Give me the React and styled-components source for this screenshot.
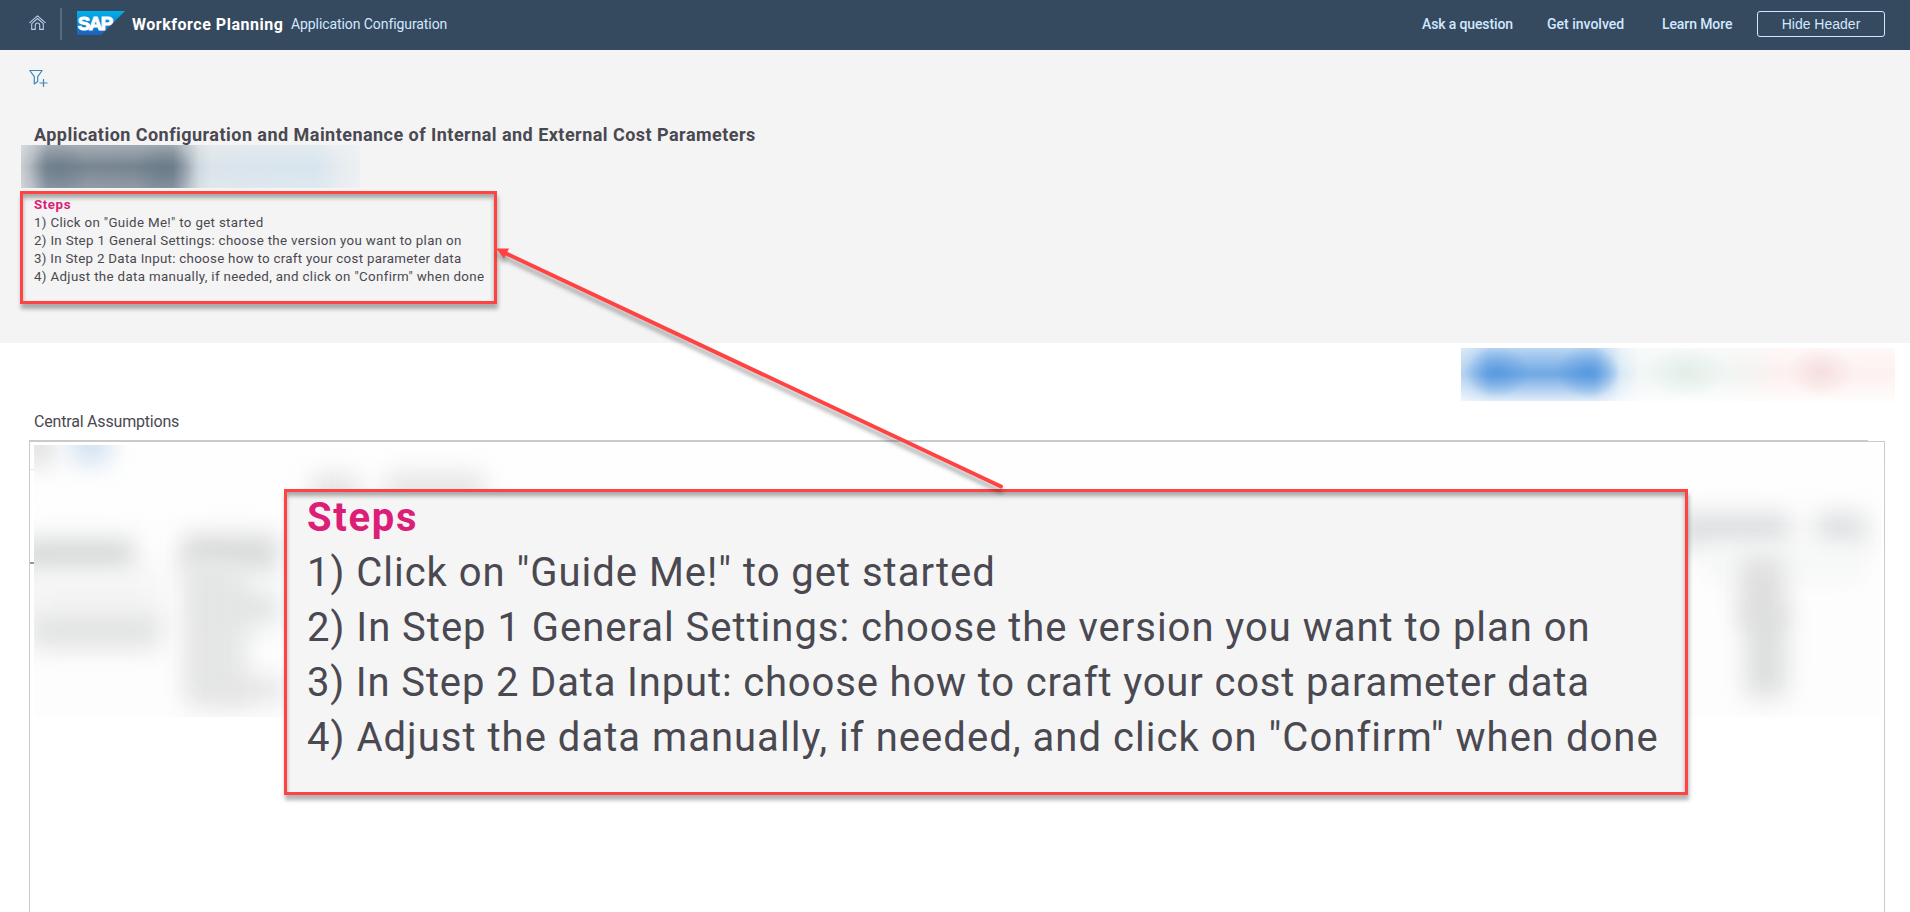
import React from "react";
import styled, { createGlobalStyle } from "styled-components";

const Global = createGlobalStyle`
  *{box-sizing:border-box}
  html,body{margin:0;padding:0;overflow:hidden;background:#fff}
  body{font-family:Roboto,"Liberation Sans",sans-serif;color:#4a4850}
`;
const Page = styled.div`width:1910px;height:912px;position:relative;display:flex;flex-direction:column;overflow:hidden;`;
const Header = styled.header`height:50px;flex:none;background:#354a5f;display:flex;align-items:center;padding:0 25px 2px 29px;color:#d1e8ff;`;
const Divider = styled.i`width:2px;height:32px;background:#576a7e;margin:0 15px 0 14px;`;
const Brand = styled.strong`font-size:16px;color:#fff;font-weight:700;margin-left:7px;width:159px;letter-spacing:.52px;white-space:nowrap;`;
const Subtitle = styled.span`font-size:14px;letter-spacing:-.08px;white-space:nowrap;`;
const Links = styled.nav`margin-left:auto;display:flex;align-items:center;`;
const Link = styled.a`font-size:14px;font-weight:500;width:${p => p.$width}px;white-space:nowrap;letter-spacing:${p => p.$ls || 0}px;`;
const HideButton = styled.button`width:128px;height:26px;border:1px solid #d1e8ff;border-radius:3px;background:none;color:#d1e8ff;font:14px "Liberation Sans",sans-serif;padding:0;`;
const Intro = styled.section`height:293px;flex:none;background:#f4f4f4;padding:19px 20px 0;display:flex;flex-direction:column;align-items:flex-start;`;
const FilterRow = styled.div`height:56px;padding-left:9px;`;
const Title = styled.h1`margin:0;padding-left:14px;font-size:18px;line-height:20px;font-weight:700;white-space:nowrap;letter-spacing:.465px;`;
const TabsBlur = styled.div`width:339px;height:43px;margin:0 0 3px 1px;
  background:radial-gradient(ellipse 30px 30px at 38px 26px,rgba(98,116,132,.5),transparent),radial-gradient(ellipse 30px 30px at 142px 26px,rgba(98,116,132,.5),transparent),
  linear-gradient(rgba(244,244,244,.36),transparent 50%,rgba(244,244,244,.2)),
  linear-gradient(90deg,#c9ced3 0,#aab2ba 12px,#7b8894 26px,#74828f 152px,#a3aeb8 166px,#cfd8df 178px,#dbe4eb 190px,#d8e5ee 295px,#e6ecf0 320px,#edf0f2);`;
const Frame = styled.div`border:3px solid #ff4343;box-shadow:1px 5px 4px rgba(0,0,0,.3),inset 0 4px 4px rgba(0,0,0,.32);`;
const SmallFrame = styled(Frame)`width:477px;height:113px;padding:2px 11px;display:flex;flex-direction:column;`;
const BigFrame = styled(Frame)`position:absolute;left:284px;top:489px;width:1404px;height:306px;background:#f5f5f5;padding:0 20px;display:flex;flex-direction:column;`;
const Line = styled.div`font-size:${p => p.$big ? 40 : 13.33}px;line-height:${p => p.$big ? 55 : 18}px;white-space:nowrap;letter-spacing:${p => p.$ls}em;
  ${p => p.$big && p.$head ? "margin-top:-2px;" : ""}
  font-weight:${p => p.$head ? 700 : 400};color:${p => p.$head ? "#dc1e78" : "#4a4850"};`;
const Content = styled.main`flex:1;display:flex;flex-direction:column;padding:5px 15px 0 29px;`;
const ActionsBlur = styled.div`align-self:flex-end;width:434px;height:53px;flex:none;
  background:radial-gradient(ellipse 32px 26px at 36px 24px,rgba(74,145,220,.6),transparent),radial-gradient(ellipse 32px 26px at 127px 24px,rgba(74,145,220,.65),transparent),
  radial-gradient(ellipse 40px 26px at 225px 24px,#e3eee8,transparent),radial-gradient(ellipse 34px 26px at 360px 24px,#f5dfdf,transparent),
  linear-gradient(rgba(255,255,255,.5),transparent 45%,transparent 52%,rgba(255,255,255,.78)),
  linear-gradient(90deg,#b9d4f0 0,#a5c9ee 10px,#74abe5 28px,#74abe5 134px,#a4c9ed 147px,#d9e9f5 160px,#f1f6f6 178px,#f0f6f3 260px,#f6f3f1 295px,#fdf1f0 320px,#fdf2f1);`;
const CaptionWrap = styled.div`height:39px;flex:none;`;
const Caption = styled.h2`margin:10px 0 0 5px;line-height:22px;font-size:16px;font-weight:400;letter-spacing:-.19px;`;
const Rule = styled.div`height:1px;width:1839px;background:#cacaca;flex:none;`;
const Grid = styled.div`flex:1;width:1856px;border:1px solid #cacaca;border-bottom:0;padding:3px 2px 0 4px;position:relative;`;
const Tick = styled.i`position:absolute;left:0;top:${p => p.$y}px;width:4px;height:${p => p.$h}px;background:${p => p.$c};`;
const Haze = styled.div`position:relative;height:272px;overflow:hidden;background:linear-gradient(#fefefe,#fdfdfd);`;
const Smudge = styled.i`position:absolute;left:${p => p.$b[0]}px;top:${p => p.$b[1]}px;width:${p => p.$b[2]}px;height:${p => p.$b[3]}px;background:${p => p.$c};filter:blur(12px);`;
const Arrow = styled.svg`position:absolute;left:480px;top:235px;filter:drop-shadow(0 5px 2px rgba(0,0,0,.33));`;

const smudges = [
  [[-10, -20, 28, 40], "#dcdcdc"], [[38, -20, 38, 38], "#cfe0f0"],
  [[278, 30, 46, 34], "#e2e2e2"], [[352, 28, 98, 34], "#e4e4e4"],
  [[-16, 94, 116, 38], "#d6d8d8"], [[-10, 124, 140, 50], "#f5f5f5"], [[-4, 169, 130, 34], "#e0e1e1"],
  [[148, 90, 96, 36], "#d8d9d9"], [[154, 120, 60, 140], "#e8e9e9"], [[156, 120, 34, 134], "#e4e5e5"],
  [[190, 145, 54, 36], "#e2e4e4"], [[190, 234, 60, 22], "#e2e2e2"],
  [[1640, 68, 116, 34], "#dcdee0"], [[1782, 68, 50, 34], "#dddfe1"], [[1670, 100, 160, 36], "#f6f7f7"],
  [[1706, 112, 44, 70], "#dedede"], [[1712, 160, 40, 92], "#dcdddd"],
];
const steps = [
  { text: "Steps", ls: 0.042 },
  { text: '1) Click on "Guide Me!" to get started', ls: 0.0245 },
  { text: "2) In Step 1 General Settings: choose the version you want to plan on", ls: 0.0245 },
  { text: "3) In Step 2 Data Input: choose how to craft your cost parameter data", ls: 0.0212 },
  { text: '4) Adjust the data manually, if needed, and click on "Confirm" when done', ls: 0.0256 },
];
const Steps = ({ big }) => steps.map((s, i) => <Line key={s.text} $big={big} $head={i === 0} $ls={s.ls}>{s.text}</Line>);

const HomeIcon = styled.svg`margin-top:-2px;flex:none;`;
const Home = () => (
  <HomeIcon width="17" height="16" viewBox="0 0 17 16" fill="none" stroke="#b9cfe6" strokeWidth="1.1" strokeLinejoin="round" strokeLinecap="round">
    <path d="M.8 7.6 8.5.8l7.7 6.8M2.7 8.6 8.5 3.5l5.8 5.1M2.7 8.8v5.6h3.6v-4.2a2.2 2.2 0 0 1 4.4 0v4.2h3.6V8.8" />
  </HomeIcon>
);
const LogoMark = styled.svg`flex:none;margin-top:-2px;`;
const Logo = () => (
  <LogoMark width="48" height="24" viewBox="0 0 48 24">
    <defs><linearGradient id="sap" x1="0" y1="0" x2="0" y2="1"><stop stopColor="#00b1eb" /><stop offset="1" stopColor="#1e5fbb" /></linearGradient></defs>
    <path fill="url(#sap)" d="M0 0h48L24 24H0z" />
    <text x=".8" y="18.8" fill="#fff" stroke="#fff" strokeWidth="1" fontFamily="Liberation Sans,sans-serif" fontWeight="700" fontSize="19" letterSpacing="-1.5" textLength="34" lengthAdjust="spacingAndGlyphs">SAP</text>
  </LogoMark>
);
const Filter = () => (
  <svg width="19" height="19" viewBox="0 0 19 19" fill="none" stroke="#3f86bd" strokeWidth="1.2">
    <path d="M.8 1.5h12.4L8.7 7.6v5L5.3 15V7.6z" strokeLinejoin="round" /><path d="M14.5 10v8M10.5 14h8" />
  </svg>
);

export default function App() {
  return (
    <Page>
      <Global />
      <Header>
        <Home /><Divider /><Logo />
        <Brand>Workforce Planning</Brand>
        <Subtitle>Application Configuration</Subtitle>
        <Links>
          <Link $width={125} $ls={-0.13}>Ask a question</Link>
          <Link $width={115}>Get involved</Link>
          <Link $width={95} $ls={-0.1}>Learn More</Link>
          <HideButton>Hide Header</HideButton>
        </Links>
      </Header>
      <Intro>
        <FilterRow><Filter /></FilterRow>
        <Title>Application Configuration and Maintenance of Internal and External Cost Parameters</Title>
        <TabsBlur />
        <SmallFrame><Steps /></SmallFrame>
      </Intro>
      <Content>
        <ActionsBlur />
        <CaptionWrap><Caption>Central Assumptions</Caption></CaptionWrap>
        <Rule />
        <Grid>
          <Tick $y={27} $h={1} $c="#e5e5e5" /><Tick $y={120} $h={2} $c="#999" />
          <Haze>{smudges.map(([b, c], i) => <Smudge key={i} $b={b} $c={c} />)}</Haze>
        </Grid>
      </Content>
      <BigFrame><Steps big /></BigFrame>
      <Arrow width="540" height="270" viewBox="480 235 540 270">
        <path d="M503 252 1001 486.5" stroke="#ff4343" strokeWidth="4" strokeLinecap="round" />
        <path d="M496 248.5h13l-5 10z" fill="#ff4343" />
      </Arrow>
    </Page>
  );
}
